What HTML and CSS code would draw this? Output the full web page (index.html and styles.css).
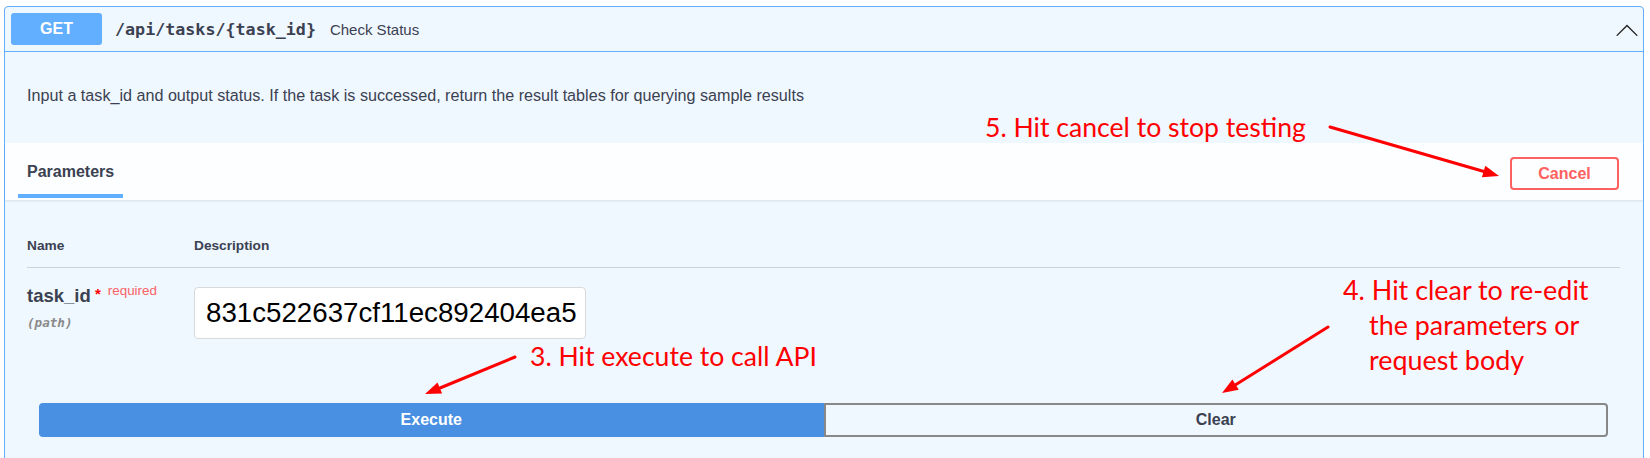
FILE: index.html
```html
<!DOCTYPE html>
<html lang="en">
<head>
<meta charset="utf-8">
<title>Check Status</title>
<link rel="stylesheet" href="styles.css">
</head>
<body>
<div class="page">
  <div class="opblock">
    <div class="summary">
      <span class="method">GET</span>
      <span class="path">/api/tasks/{task_id}</span>
      <span class="summary-desc">Check Status</span>
      <svg class="chevron" width="28" height="28" viewBox="0 0 20 20" aria-hidden="true">
        <path d="M17.418 14.908c-.189.189-.49.189-.679 0L10 8.169l-6.738 6.739c-.189.189-.491.189-.68 0-.187-.188-.187-.49 0-.678L9.66 7.153c.188-.188.49-.188.68 0l7.078 7.077c.188.188.188.49 0 .678z" fill="#222"/>
      </svg>
    </div>
    <div class="description">Input a task_id and output status. If the task is successed, return the result tables for querying sample results</div>
    <div class="section-header">
      <div class="tab">Parameters</div>
      <button class="btn-cancel">Cancel</button>
    </div>
    <div class="params">
      <div class="params-head">
        <div class="col-name">Name</div>
        <div class="col-desc">Description</div>
      </div>
      <div class="param-row">
        <div class="col-name">
          <div class="param-name">task_id<span class="star">&nbsp;*</span><span class="required">required</span></div>
          <div class="param-in">(path)</div>
        </div>
        <div class="col-desc">
          <div class="input">831c522637cf11ec892404ea5</div>
        </div>
      </div>
    </div>
    <div class="btn-group">
      <button class="execute">Execute</button>
      <button class="clear">Clear</button>
    </div>
  </div>

  <div class="note note5">5. Hit cancel to stop testing</div>
  <div class="note note4">4. Hit clear to re-edit<br>the parameters or<br>request body</div>
  <div class="note note3">3. Hit execute to call API</div>

  <svg class="arrows" width="1650" height="458" viewBox="0 0 1650 458" aria-hidden="true">
    <g stroke="#ff0000" stroke-width="3" stroke-linecap="round" fill="none">
      <line x1="1330" y1="127" x2="1484" y2="171.5"/>
      <line x1="515" y1="357" x2="440" y2="388"/>
      <line x1="1328" y1="327" x2="1236" y2="384.5"/>
    </g>
    <g fill="#ff0000">
      <polygon points="1499,176 1481.9,177.3 1485.3,165.7"/>
      <polygon points="425,394 437.5,382.4 442.1,393.5"/>
      <polygon points="1222,393 1232.4,379.5 1238.8,389.7"/>
    </g>
  </svg>
</div>
</body>
</html>
```

FILE: styles.css
```css
html, body {
  margin: 0;
  padding: 0;
  overflow: hidden;
  background: #ffffff;
}

.page {
  position: relative;
  width: 1650px;
  height: 458px;
  box-sizing: border-box;
  padding: 6px 6px 0 4px;
  font-family: "Liberation Sans", Arial, sans-serif;
  color: #3b4151;
}

.opblock {
  border: 1px solid #61affe;
  border-radius: 4px;
  background: #eff7ff;
  padding-bottom: 40px;
}

.summary {
  display: flex;
  align-items: center;
  height: 44px;
  padding: 0 2px 0 6px;
  border-bottom: 1px solid #61affe;
}

.method {
  width: 91px;
  height: 32px;
  display: flex;
  align-items: center;
  justify-content: center;
  background: #61affe;
  color: #ffffff;
  border-radius: 3px;
  font-weight: bold;
  font-size: 16px;
}

.path {
  margin-left: 13px;
  font-family: "DejaVu Sans Mono", "Liberation Mono", monospace;
  font-weight: bold;
  font-size: 16.7px;
  color: #3b4151;
}

.summary-desc {
  margin-left: 14px;
  font-size: 15px;
  color: #3b4151;
}

.chevron {
  margin-left: auto;
}

.description {
  height: 91px;
  box-sizing: border-box;
  padding: 33px 22px 0;
  font-size: 16.15px;
  line-height: 20px;
}

.section-header {
  height: 57px;
  display: flex;
  align-items: stretch;
  padding: 0 24px 0 13px;
  background: rgba(255, 255, 255, 0.8);
  box-shadow: 0 1px 2px rgba(0, 0, 0, 0.1);
}

.tab {
  display: flex;
  align-items: center;
  padding: 7px 9px 0;
  margin-bottom: 2px;
  border-bottom: 4px solid #61affe;
  font-weight: bold;
  font-size: 16px;
}

.btn-cancel {
  margin-left: auto;
  margin-top: 4px;
  align-self: center;
  width: 109px;
  height: 33px;
  border: 2px solid #ff6060;
  border-radius: 4px;
  background: transparent;
  color: #ff6060;
  font-family: "Liberation Sans", Arial, sans-serif;
  font-weight: bold;
  font-size: 16px;
  padding: 0;
}

.params {
  padding: 0 23px 0 22px;
}

.params-head {
  display: flex;
  padding: 38px 0 13px;
  border-bottom: 1px solid rgba(59, 65, 81, 0.2);
  font-weight: bold;
  font-size: 13.7px;
  line-height: 16px;
}

.col-name {
  width: 167px;
  flex: none;
}

.param-row {
  display: flex;
}

.param-row .col-name {
  padding-top: 12px;
}

.param-name {
  font-weight: bold;
  font-size: 18.5px;
  line-height: 22px;
  white-space: nowrap;
}

.star {
  color: #ff0000;
  font-size: 15px;
  vertical-align: 3px;
}

.required {
  color: #f96366;
  font-weight: normal;
  font-size: 13.4px;
  padding-left: 7px;
  vertical-align: 7px;
}

.param-in {
  margin-top: 9px;
  font-family: "DejaVu Sans Mono", "Liberation Mono", monospace;
  font-style: italic;
  font-weight: bold;
  font-size: 12.6px;
  line-height: 14px;
  color: #8a8a8a;
}

.param-row .col-desc {
  padding-top: 19px;
}

.input {
  width: 392px;
  height: 52px;
  box-sizing: border-box;
  padding: 0 10px 0 11px;
  border: 1px solid #d9d9d9;
  border-radius: 4px;
  background: #ffffff;
  color: #000000;
  font-size: 27.7px;
  line-height: 50px;
  white-space: nowrap;
  overflow: hidden;
}

.btn-group {
  display: flex;
  margin-top: 64px;
  padding: 0 35px 0 34px;
}

.execute,
.clear {
  flex: 1;
  height: 34px;
  padding: 0;
  font-family: "Liberation Sans", Arial, sans-serif;
  font-weight: bold;
  font-size: 16px;
}

.execute {
  background: #4990e2;
  border: 2px solid #4990e2;
  border-radius: 4px 0 0 4px;
  color: #ffffff;
}

.clear {
  background: transparent;
  border: 2px solid #888888;
  border-radius: 0 4px 4px 0;
  color: #3b4151;
}

.note {
  position: absolute;
  color: #ff0000;
  font-family: Lato, "Open Sans", sans-serif;
  font-size: 26.6px;
  line-height: 32px;
  white-space: nowrap;
}

.note5 {
  left: 985px;
  top: 111px;
}

.note3 {
  left: 530px;
  top: 340px;
}

.note4 {
  left: 1343px;
  top: 272px;
  font-size: 26.9px;
  line-height: 35px;
  padding-left: 26px;
  text-indent: -26px;
}

.arrows {
  position: absolute;
  left: 0;
  top: 0;
  pointer-events: none;
}
```
